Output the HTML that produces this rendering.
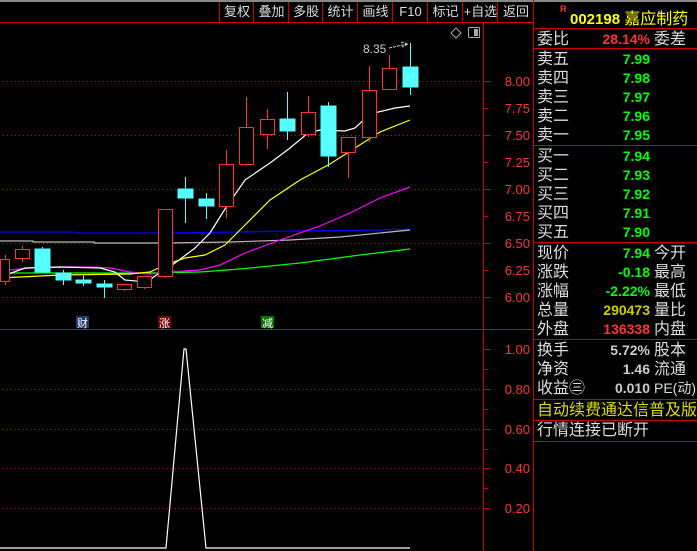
<!DOCTYPE html>
<html><head><meta charset="utf-8"><style>
*{margin:0;padding:0}
body{width:697px;height:551px;background:#000;overflow:hidden;position:relative;font-family:"Liberation Sans","Noto Sans CJK SC",sans-serif}
.tb{position:absolute;top:2px;height:20px;font-size:13px;color:#ddd;line-height:20px;text-align:center;border-left:1px solid #c00;font-family:"Liberation Sans","Noto Sans CJK SC",sans-serif}
.rp{position:absolute;left:534px;top:0;width:163px;height:551px}
.row{position:absolute;left:3px;width:160px;height:19px;font-size:16px;line-height:19px;color:#ddd;font-family:"Liberation Sans","WenQuanYi Zen Hei",sans-serif;white-space:nowrap}
.row .v{position:absolute;right:47px;top:0;font-weight:bold;font-size:14px}
.row .r{position:absolute;left:117px;top:0}
.hl{position:absolute;left:534px;width:163px;height:1px;background:#c00}
</style></head><body>
<div style="position:absolute;left:0;top:0;width:697px;height:2px;background:#888"></div>
<div class="tb" style="left:219px;width:34px">复权</div>
<div class="tb" style="left:253px;width:35px">叠加</div>
<div class="tb" style="left:288px;width:34px">多股</div>
<div class="tb" style="left:322px;width:35px">统计</div>
<div class="tb" style="left:357px;width:35px">画线</div>
<div class="tb" style="left:392px;width:35px">F10</div>
<div class="tb" style="left:427px;width:35px">标记</div>
<div class="tb" style="left:462px;width:35px">+自选</div>
<div class="tb" style="left:497px;width:36px">返回</div>
<svg width="697" height="551" style="position:absolute;left:0;top:0" xmlns="http://www.w3.org/2000/svg">
<line x1="0" y1="22.5" x2="534" y2="22.5" stroke="#c00"/>
<line x1="483.5" y1="22" x2="483.5" y2="551" stroke="#c00"/>
<line x1="533.5" y1="0" x2="533.5" y2="551" stroke="#c00"/>
<line x1="0" y1="329.5" x2="534" y2="329.5" stroke="#c00"/>
<g stroke="#c00" stroke-dasharray="1,3">
<line x1="3" y1="81.5" x2="483" y2="81.5"/><line x1="3" y1="135.5" x2="483" y2="135.5"/><line x1="3" y1="189.5" x2="483" y2="189.5"/><line x1="3" y1="243.5" x2="483" y2="243.5"/><line x1="3" y1="297.5" x2="483" y2="297.5"/>
<line x1="3" y1="389.5" x2="483" y2="389.5"/><line x1="3" y1="429.5" x2="483" y2="429.5"/><line x1="3" y1="468.5" x2="483" y2="468.5"/><line x1="3" y1="508.5" x2="483" y2="508.5"/>
</g>
<g stroke="#c00">
<line x1="484" y1="81.5" x2="490" y2="81.5"/><line x1="484" y1="108.5" x2="488" y2="108.5"/><line x1="484" y1="135.5" x2="490" y2="135.5"/><line x1="484" y1="162.5" x2="488" y2="162.5"/><line x1="484" y1="189.5" x2="490" y2="189.5"/><line x1="484" y1="216.5" x2="488" y2="216.5"/><line x1="484" y1="243.5" x2="490" y2="243.5"/><line x1="484" y1="270.5" x2="488" y2="270.5"/><line x1="484" y1="297.5" x2="490" y2="297.5"/>
<line x1="484" y1="349.5" x2="490" y2="349.5"/><line x1="484" y1="369.5" x2="488" y2="369.5"/><line x1="484" y1="389.5" x2="490" y2="389.5"/><line x1="484" y1="409.5" x2="488" y2="409.5"/><line x1="484" y1="429.5" x2="490" y2="429.5"/><line x1="484" y1="449.5" x2="488" y2="449.5"/><line x1="484" y1="468.5" x2="490" y2="468.5"/><line x1="484" y1="488.5" x2="488" y2="488.5"/><line x1="484" y1="508.5" x2="490" y2="508.5"/>
</g>
<g fill="#f33" font-size="13" font-family="Liberation Sans" text-anchor="end">
<text x="530" y="86">8.00</text><text x="530" y="113">7.75</text><text x="530" y="140">7.50</text><text x="530" y="167">7.25</text><text x="530" y="194">7.00</text><text x="530" y="221">6.75</text><text x="530" y="248">6.50</text><text x="530" y="275">6.25</text><text x="530" y="302">6.00</text>
<text x="530" y="354">1.00</text><text x="530" y="394">0.80</text><text x="530" y="434">0.60</text><text x="530" y="473">0.40</text><text x="530" y="513">0.20</text>
</g>
<path d="M456 28 L461 33 L456 38 L451 33 Z" fill="none" stroke="#aaa"/>
<rect x="468.5" y="27.5" width="11" height="10" rx="1" fill="none" stroke="#aaa"/><rect x="474" y="29" width="4" height="7" fill="#aaa"/>
<polyline fill="none" stroke="#00f" stroke-width="1.3" points="0,232 74,232 74,233 160,233 235,232 300,231 380,230 410,229"/>
<polyline fill="none" stroke="#bbb" stroke-width="1.2" points="0,241 33,241 33,242 94,242 94,243 170,243 230,242 290,240 340,237 410,230"/>
<polyline fill="none" stroke="#0f0" stroke-width="1.2" points="0,273 150,273 200,272 240,269 300,263 360,255 410,249"/>
<polyline fill="none" stroke="#f0f" stroke-width="1.2" points="0,271 30,268 60,267 90,267 110,268 130,272 150,274 170,272 200,270 220,265 245,253 280,240 320,226 350,213 380,198 410,187"/>
<polyline fill="none" stroke="#ff0" stroke-width="1.2" points="0,278 20,277 60,275 130,274 150,272 165,265 185,258 205,255 225,245 245,225 270,200 300,180 330,164 355,148 380,132 410,120"/>
<polyline fill="none" stroke="#fff" stroke-width="1.2" points="0,277 25,268 60,267 100,268 115,272 125,280 147,282 155,276 175,263 195,248 210,233 225,209 245,180 270,163 290,148 308,133 320,130 345,131 355,128 370,114 395,108 410,106"/>
<g stroke="#f33" fill="#000">
<line x1="5.5" y1="255" x2="5.5" y2="285"/><rect x="0.5" y="259.5" width="9" height="22"/>
<line x1="22.5" y1="246" x2="22.5" y2="262"/><rect x="15.5" y="249.5" width="14" height="9"/>
<line x1="124.5" y1="289" x2="124.5" y2="291"/><rect x="117.5" y="284.5" width="14" height="5"/>
<line x1="144.5" y1="287" x2="144.5" y2="289"/><rect x="137.5" y="276.5" width="14" height="11"/>
<line x1="165.5" y1="209" x2="165.5" y2="278"/><rect x="158.5" y="209.5" width="14" height="67"/>
<line x1="226.5" y1="150" x2="226.5" y2="218"/><rect x="219.5" y="164.5" width="14" height="42"/>
<line x1="246.5" y1="97" x2="246.5" y2="166"/><rect x="239.5" y="127.5" width="14" height="37"/>
<line x1="267.5" y1="109" x2="267.5" y2="149"/><rect x="260.5" y="119.5" width="14" height="15"/>
<line x1="308.5" y1="96" x2="308.5" y2="137"/><rect x="301.5" y="112.5" width="14" height="22"/>
<line x1="348.5" y1="137" x2="348.5" y2="178"/><rect x="341.5" y="137.5" width="14" height="15"/>
<line x1="369.5" y1="66" x2="369.5" y2="142"/><rect x="362.5" y="90.5" width="14" height="47"/>
<line x1="389.5" y1="55" x2="389.5" y2="68"/><rect x="382.5" y="68.5" width="14" height="21"/>
</g>
<g fill="#5ff" stroke="#5ff">
<rect x="35" y="249" width="15" height="23"/><line x1="42.5" y1="247" x2="42.5" y2="249"/>
<rect x="56" y="273" width="15" height="7"/><line x1="63.5" y1="270" x2="63.5" y2="285"/>
<rect x="76" y="280" width="15" height="3"/><line x1="83.5" y1="274" x2="83.5" y2="286"/>
<rect x="97" y="284" width="15" height="3"/><line x1="104.5" y1="280" x2="104.5" y2="298"/>
<rect x="178" y="189" width="15" height="9"/><line x1="185.5" y1="177" x2="185.5" y2="223"/>
<rect x="199" y="199" width="15" height="7"/><line x1="206.5" y1="193" x2="206.5" y2="219"/>
<rect x="280" y="119" width="15" height="12"/><line x1="287.5" y1="92" x2="287.5" y2="140"/>
<rect x="321" y="106" width="15" height="50"/><line x1="328.5" y1="102" x2="328.5" y2="167"/>
<rect x="403" y="67" width="15" height="20"/><line x1="410.5" y1="43" x2="410.5" y2="95"/>
</g>
<text x="363" y="53" fill="#ccc" font-size="12" font-family="Liberation Sans">8.35</text>
<path d="M389 48 L407 44 M401 42 L408 44 L402 47" fill="none" stroke="#ccc" stroke-dasharray="3,1"/>
<rect x="76" y="316" width="13" height="12" fill="#1a3a6a"/><text x="77" y="327" fill="#fff" font-size="11" font-family="Noto Sans CJK SC">财</text>
<rect x="158" y="316" width="13" height="12" fill="#700"/><text x="159" y="327" fill="#fff" font-size="11" font-family="Noto Sans CJK SC">涨</text>
<rect x="261" y="316" width="13" height="12" fill="#070"/><text x="262" y="327" fill="#fff" font-size="11" font-family="Noto Sans CJK SC">减</text>
<polyline fill="none" stroke="#fff" stroke-width="1.2" points="0,548 166,548 184,349 186,349 206,548 410,548"/>
</svg>
<div class="rp">
<div style="position:absolute;left:26px;top:4px;font-size:9px;color:#f33;font-weight:bold">R</div>
<div style="position:absolute;left:36px;top:5px;font-size:15px;color:#ff0;font-weight:bold;font-family:'Liberation Sans','WenQuanYi Zen Hei',sans-serif">002198 <span style="font-weight:normal;font-size:16px">嘉应制药</span></div>
<div class="row" style="top:30px">委比<span class="v" style="color:#f33">28.14%</span><span class="r">委差</span></div>
<div class="row" style="top:50px">卖五<span class="v" style="color:#0f0">7.99</span></div>
<div class="row" style="top:69px">卖四<span class="v" style="color:#0f0">7.98</span></div>
<div class="row" style="top:88px">卖三<span class="v" style="color:#0f0">7.97</span></div>
<div class="row" style="top:107px">卖二<span class="v" style="color:#0f0">7.96</span></div>
<div class="row" style="top:126px">卖一<span class="v" style="color:#0f0">7.95</span></div>
<div class="row" style="top:147px">买一<span class="v" style="color:#0f0">7.94</span></div>
<div class="row" style="top:166px">买二<span class="v" style="color:#0f0">7.93</span></div>
<div class="row" style="top:185px">买三<span class="v" style="color:#0f0">7.92</span></div>
<div class="row" style="top:204px">买四<span class="v" style="color:#0f0">7.91</span></div>
<div class="row" style="top:223px">买五<span class="v" style="color:#0f0">7.90</span></div>
<div class="row" style="top:244px">现价<span class="v" style="color:#0f0">7.94</span><span class="r">今开</span></div>
<div class="row" style="top:263px">涨跌<span class="v" style="color:#0f0">-0.18</span><span class="r">最高</span></div>
<div class="row" style="top:282px">涨幅<span class="v" style="color:#0f0">-2.22%</span><span class="r">最低</span></div>
<div class="row" style="top:301px">总量<span class="v" style="color:#cc0">290473</span><span class="r">量比</span></div>
<div class="row" style="top:320px">外盘<span class="v" style="color:#f33">136338</span><span class="r">内盘</span></div>
<div class="row" style="top:341px">换手<span class="v" style="color:#ccc">5.72%</span><span class="r">股本</span></div>
<div class="row" style="top:360px">净资<span class="v" style="color:#ccc">1.46</span><span class="r">流通</span></div>
<div class="row" style="top:379px">收益㊂<span class="v" style="color:#ccc">0.010</span><span class="r" style="font-size:14px">PE(动)</span></div>
<div class="row" style="top:401px;color:#dd0;width:165px;overflow:hidden">自动续费通达信普及版</div>
<div class="row" style="top:421px">行情连接已断开</div>
</div>
<div class="hl" style="top:28px"></div>
<div class="hl" style="top:48px"></div>
<div class="hl" style="top:145px"></div>
<div class="hl" style="top:242px"></div>
<div class="hl" style="top:339px"></div>
<div class="hl" style="top:399px"></div>
<div class="hl" style="top:420px"></div>
<div class="hl" style="top:441px"></div>
</body></html>
